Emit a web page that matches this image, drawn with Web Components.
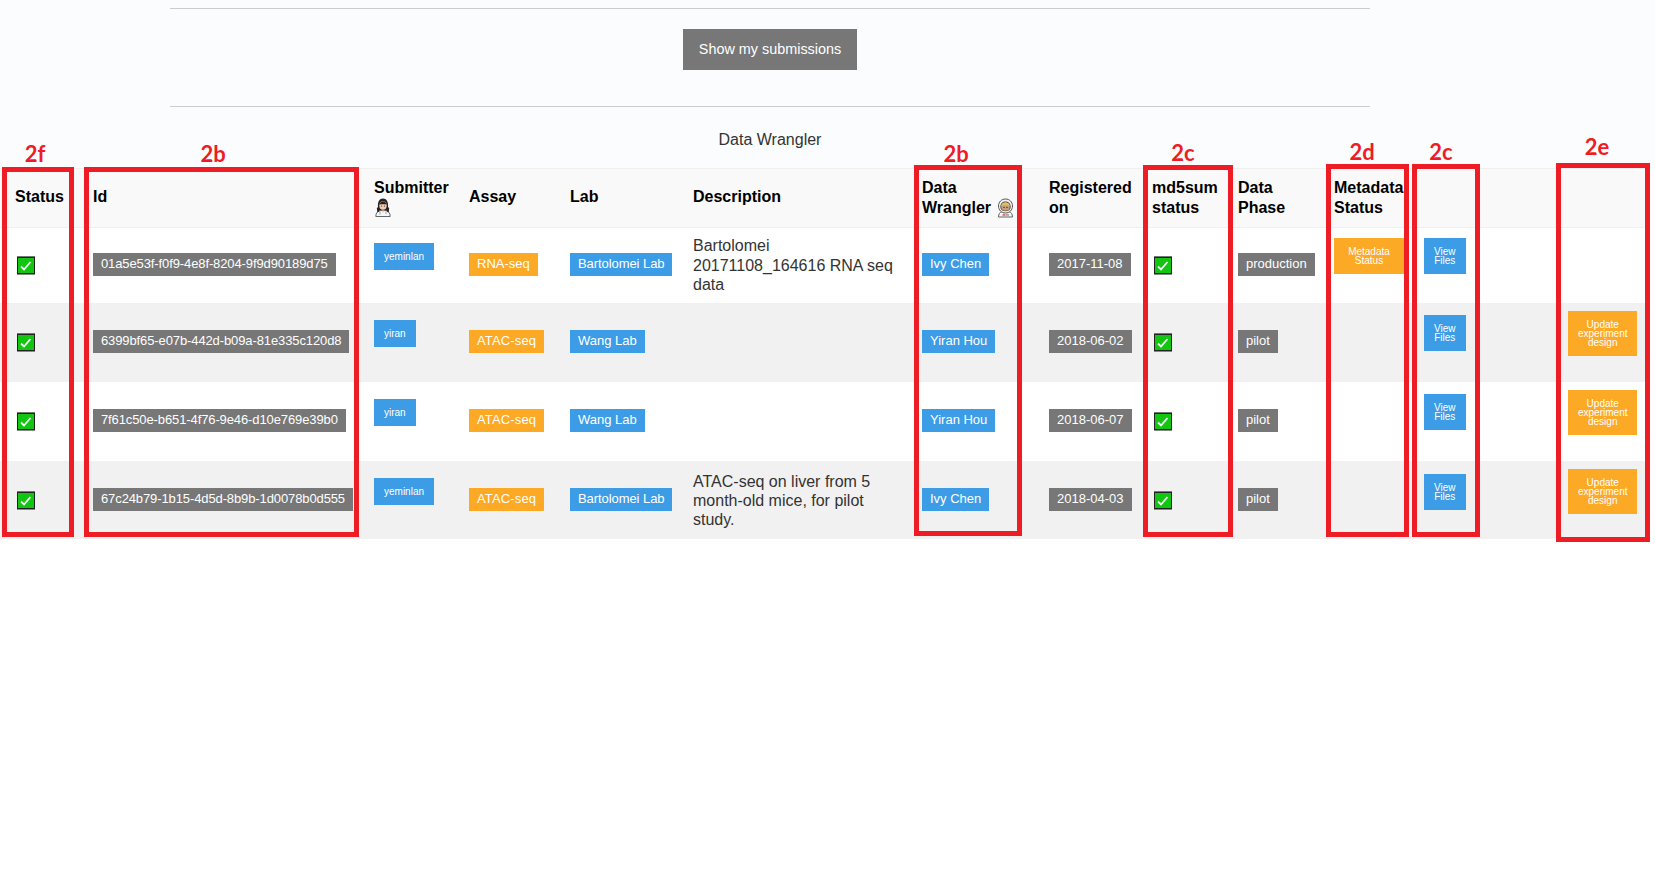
<!DOCTYPE html>
<html lang="en"><head><meta charset="utf-8"><title>Submissions</title>
<style>
html,body{margin:0;padding:0;background:#fff;font-family:"Liberation Sans",Arial,sans-serif}
</style></head><body>
<x-app></x-app>
<script>
function def(name, css, html){
  class C extends HTMLElement{
    constructor(){super();this.attachShadow({mode:'open'});
      this.shadowRoot.innerHTML='<style>'+css+'</style>'+html;}
  }
  customElements.define(name,C);
}
const SANS='"Liberation Sans",Arial,sans-serif';
def('x-badge',`:host{display:block;width:fit-content;margin-bottom:2px;padding:0 8px;height:23px;font:13px/22px ${SANS};color:#fff;white-space:nowrap;background:#777}
:host([c=blue]){background:#3c9ce6}:host([c=orange]){background:#fca926}:host([c=gray]){background:#777}`,'<slot></slot>');
def('x-tiny',`:host{display:block;box-sizing:border-box;margin-bottom:18px;padding:9px 10px;font:10px/9px ${SANS};color:#fff;text-align:center;width:min-content}
:host([c=blue]){background:#3c9ce6}:host([c=orange]){background:#fca926}:host([wide]){width:70px}:host([single]){width:fit-content;white-space:nowrap}`,'<slot></slot>');
def('x-main-btn',`:host{display:block;width:fit-content;margin:0 auto;padding:0 16px;height:41px;font:14.4px/41px ${SANS};color:#fff;background:#777}`,'<slot></slot>');
def('x-check',`:host{display:block;width:18px;height:19px;margin-left:2px}svg{display:block}`,
`<svg width="18" height="19" viewBox="0 0 18 19"><rect width="18" height="19" fill="#222"/><rect y="0" width="18" height="1" fill="#777"/><rect y="18" width="18" height="1" fill="#888"/><rect x="1" y="2" width="16" height="15" fill="#11c511"/><path d="M4 10.5 L7 13.5 L13.5 6" fill="none" stroke="#f4fff4" stroke-width="1.8"/></svg>`);
def('x-doctor',`:host{display:inline-block;width:16px;height:19px;vertical-align:top;margin-left:1px}svg{display:block}`,
`<svg width="16" height="19" viewBox="0 0 16 19"><path d="M3 9C2.500 3.500 4.500 .5 8 .5s5.500 3 5 8.500l1 6H2z" fill="#2a2222"/><path d="M.8 18.500c0-3.500 1.700-5.500 4.500-6h5.400c2.800.5 4.500 2.500 4.500 6z" fill="#f4f6f8" stroke="#555" stroke-width=".9"/><path d="M2.500 14 1.800 10l1.500-1 .7 5zM13.500 14l.7-4-1.500-1-.7 5z" fill="#2a2222"/><ellipse cx="8" cy="7.500" rx="3.700" ry="4.300" fill="#f2cdb4"/><path d="M4.200 6.500C5 4 7 3.500 8 3.500s3 .5 3.800 3C9.500 6 6.500 6 4.200 6.500z" fill="#2a2222"/><circle cx="6.500" cy="8" r=".6" fill="#322"/><circle cx="9.500" cy="8" r=".6" fill="#322"/><path d="M6.500 12.500 8 15l1.500-2.500" fill="#f2cdb4"/><path d="M5 13.500v3M11 13.500v2.500" stroke="#7fa6c4" fill="none"/></svg>`);
def('x-astro',`:host{display:inline-block;width:17px;height:20px;vertical-align:top;margin-left:1px}svg{display:block}`,
`<svg width="17" height="20" viewBox="0 0 17 20"><path d="M1.500 19c0-3 1.300-5 4-5.500h6c2.700.5 4 2.500 4 5.500z" fill="#f4f4f4" stroke="#555" stroke-width=".9"/><path d="M8.500 1C4.500 1 1.500 4 1.500 8s3 7 7 7 7-3 7-7-3-7-7-7z" fill="#f2f2f2" stroke="#555" stroke-width="1"/><path d="M3.300 9c0-3.500 2.200-5.500 5.200-5.500s5.200 2 5.200 5.500c0 2.800-2.200 4.300-5.200 4.300S3.300 11.800 3.300 9z" fill="#4a4a4a"/><ellipse cx="8.500" cy="9.300" rx="4.200" ry="3.500" fill="#c99d78"/><path d="M4 8.500C4.500 5 7 4.300 8.500 4.300s4 .7 4.500 4.200C11 6.800 6 6.800 4 8.500z" fill="#dfc06a"/><circle cx="7" cy="9.400" r=".6" fill="#321"/><circle cx="10" cy="9.400" r=".6" fill="#321"/><rect x="5.500" y="16.300" width="3" height="1.300" fill="#d33"/><rect x="9" y="16.300" width="3" height="1.300" fill="#888"/></svg>`);
def('x-mark',`:host{position:absolute;box-sizing:border-box;border:5px solid #ee1c25}
span{position:absolute;top:var(--dy,-31px);left:var(--dx,0);width:100%;text-align:center;font:bold 22px/26px Lato,sans-serif;color:#ee1c25;white-space:nowrap}`,'<span><slot></slot></span>');

const rows=[
 {id:'01a5e53f-f0f9-4e8f-8204-9f9d90189d75',sub:'yeminlan',assay:'RNA-seq',lab:'Bartolomei Lab',desc:'Bartolomei 20171108_164616 RNA seq data',dw:'Ivy Chen',date:'2017-11-08',phase:'production',meta:true,up:false,h:75},
 {id:'6399bf65-e07b-442d-b09a-81e335c120d8',sub:'yiran',assay:'ATAC-seq',lab:'Wang Lab',desc:'',dw:'Yiran Hou',date:'2018-06-02',phase:'pilot',up:true,h:79},
 {id:'7f61c50e-b651-4f76-9e46-d10e769e39b0',sub:'yiran',assay:'ATAC-seq',lab:'Wang Lab',desc:'',dw:'Yiran Hou',date:'2018-06-07',phase:'pilot',up:true,h:79},
 {id:'67c24b79-1b15-4d5d-8b9b-1d0078b0d555',sub:'yeminlan',assay:'ATAC-seq',lab:'Bartolomei Lab',desc:'ATAC-seq on liver from 5 month-old mice, for pilot study.',dw:'Ivy Chen',date:'2018-04-03',phase:'pilot',up:true,h:78}
];
const widths=[85,281,95,101,123,229,127,103,86,96,90,144,90];
const ls=s=>s==='ATAC-seq'?'style="letter-spacing:.15px"':'';
const rowHtml=r=>`<tr style="height:${r.h}px">
<td class="first"><x-check></x-check></td>
<td><x-badge c="gray" style="letter-spacing:-.11px">${r.id}</x-badge></td>
<td><x-tiny c="blue" single>${r.sub}</x-tiny></td>
<td><x-badge c="orange" ${ls(r.assay)}>${r.assay}</x-badge></td>
<td><x-badge c="blue" style="letter-spacing:${r.lab==='Wang Lab'?'0':'-.07'}px">${r.lab}</x-badge></td>
<td class="desc">${r.desc}</td>
<td><x-badge c="blue">${r.dw}</x-badge></td>
<td><x-badge c="gray">${r.date}</x-badge></td>
<td><x-check></x-check></td>
<td><x-badge c="gray">${r.phase}</x-badge></td>
<td>${r.meta?'<x-tiny c="orange" wide>Metadata Status</x-tiny>':''}</td>
<td><x-tiny c="blue">View Files</x-tiny></td>
<td>${r.up?'<x-tiny c="orange">Update experiment design</x-tiny>':''}</td>
</tr>`;
def('x-table',`:host{display:block;width:1650px}
table{border-collapse:collapse;table-layout:fixed;width:1650px;font:16px/19.2px ${SANS};color:#333}
thead tr{height:59px;background:#f9f9f9;border-top:1px solid #f0f0f0;border-bottom:1px solid #f0f0f0}
th{font-weight:bold;color:#000;text-align:left;padding:0 0 0 8px;vertical-align:middle;line-height:20px}
th.one{padding-bottom:2px}
td{padding:0 0 0 8px;vertical-align:middle}
tbody tr:nth-child(even){background:#f1f1f1}
tbody tr:nth-child(odd){background:#fff}
tbody tr:last-child td{padding-top:2px}
th.first,td.first{padding-left:15px}
.desc{padding-right:10px}
`,`<table><colgroup>${widths.map(w=>`<col style="width:${w}px">`).join('')}</colgroup>
<thead><tr><th class="first one">Status</th><th class="one">Id</th><th>Submitter<br><x-doctor></x-doctor></th><th class="one">Assay</th><th class="one">Lab</th><th class="one">Description</th>
<th>Data<br>Wrangler <x-astro></x-astro></th><th>Registered<br>on</th><th>md5sum<br>status</th><th>Data<br>Phase</th><th style="white-space:nowrap">Metadata<br>Status</th><th></th><th></th></tr></thead>
<tbody>${rows.map(rowHtml).join('')}</tbody></table>`);
def('x-head',`:host{display:block;height:168px;box-sizing:border-box;background:#fbfcfe;padding-top:8px}
.wrap{width:1200px;margin-left:170px}
.rule{height:1px;background:#ccc}
.action{padding:20px 0 36px}
.title{margin-top:23px;text-align:center;font:16px/19px ${SANS};color:#333}`,
`<div class="wrap"><div class="rule"></div><div class="action"><x-main-btn>Show my submissions</x-main-btn></div><div class="rule"></div><div class="title">Data Wrangler</div></div>`);
const marks=[['2f',2,167,72,370,-3,-31],['2b',84,167,275,370,-8.5,-31],['2b',914,165,108,371,-12,-29],['2c',1143,165,90,372,-5,-30],['2d',1326,164,83,373,-5.5,-30],['2c',1412,164,68,373,-5,-30],['2e',1556,163,94,379,-6,-34]];
def('x-app',`:host{display:block;position:relative;width:1655px;height:871px;overflow:hidden;background:#fff}`,
`<x-head></x-head><x-table></x-table>${marks.map(m=>`<x-mark style="left:${m[1]}px;top:${m[2]}px;width:${m[3]}px;height:${m[4]}px;--dx:${m[5]}px;--dy:${m[6]}px">${m[0]}</x-mark>`).join('')}`);
</script>
</body></html>
